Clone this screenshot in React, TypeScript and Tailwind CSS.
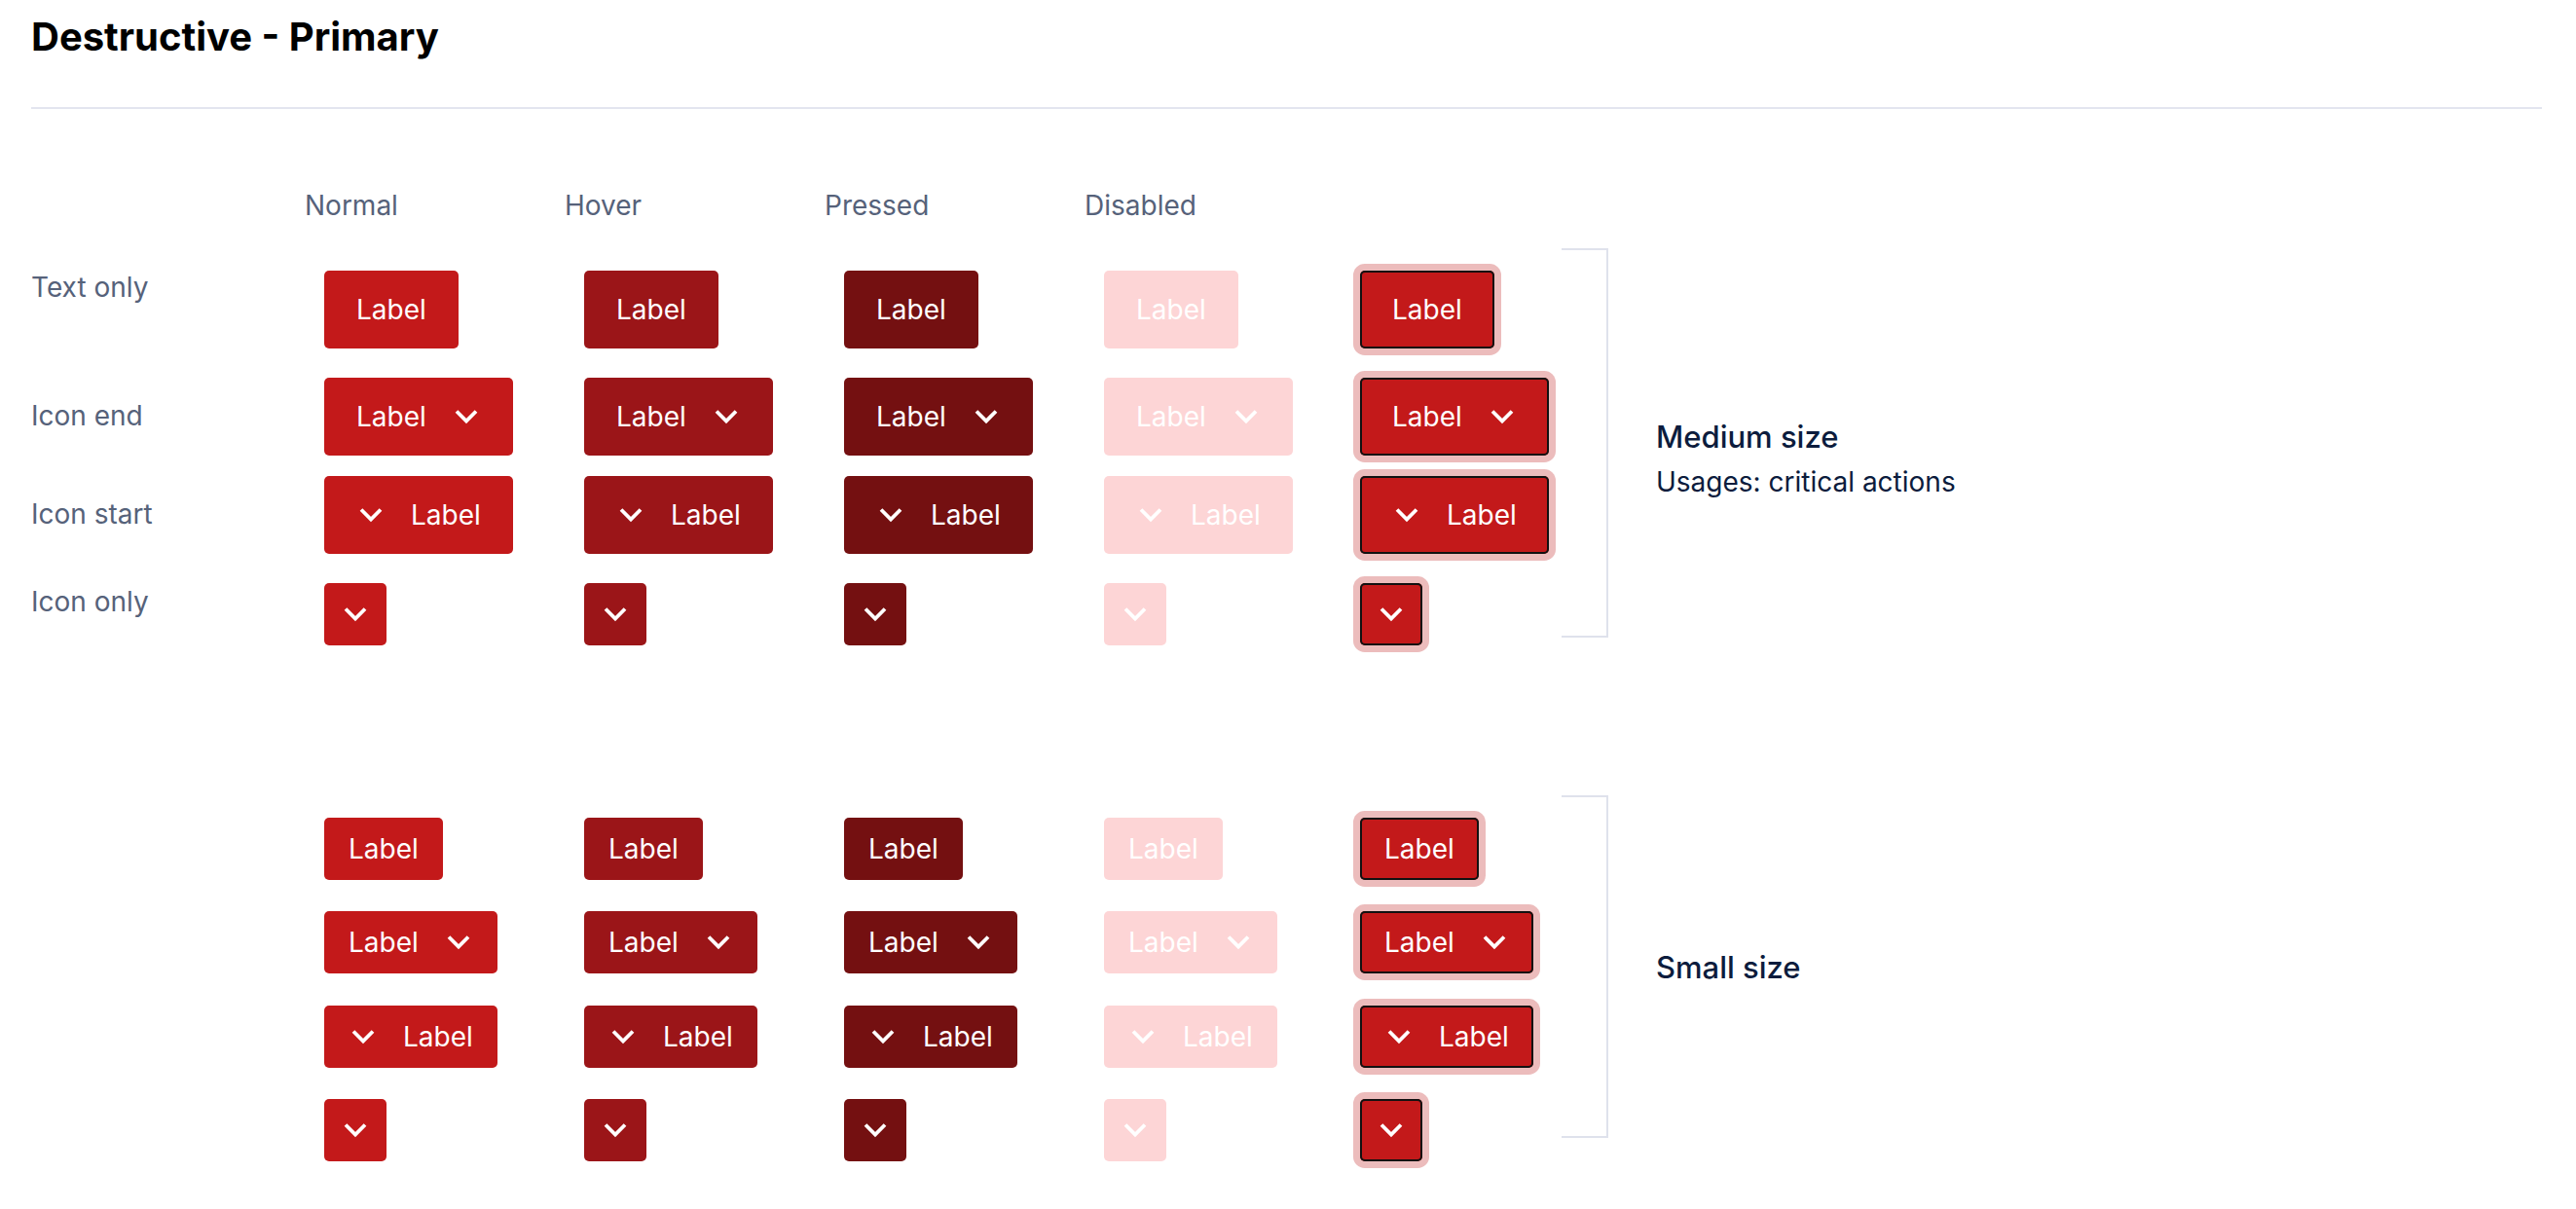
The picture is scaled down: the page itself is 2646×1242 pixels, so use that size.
import type { ReactNode } from "react";

type Variant = "text" | "end" | "start" | "icon";
type State = "normal" | "hover" | "pressed" | "disabled" | "focus";
type Size = "md" | "sm";

const states: State[] = ["normal", "hover", "pressed", "disabled", "focus"];
const cellWidths = ["w-[267px]", "w-[267px]", "w-[267px]", "w-[263px]", "w-[207px]"];

const stateClass: Record<State, string> = {
  normal: "bg-[#c3191a]",
  hover: "bg-[#9b1518]",
  pressed: "bg-[#741011]",
  disabled: "bg-[#fdd5d6]",
  focus: "bg-[#c3191a] shadow-[inset_0_0_0_2px_#111111,0_0_0_7px_#ecbcbc]",
};

const Chevron = () => (
  <svg width="30" height="16" viewBox="0 0 30 16" fill="none" className="shrink-0">
    <path d="M5 2.5L15 12.5L25 2.5" stroke="white" strokeWidth="3.8" />
  </svg>
);

const DemoButton = ({ variant, state, size }: { variant: Variant; state: State; size: Size }) => {
  const base = "flex items-center justify-center rounded-[5px] text-white text-[28px] leading-[34px]";

  if (variant === "icon") {
    return (
      <button className={`${base} w-[64px] h-[64px] ${stateClass[state]}`}>
        <Chevron />
      </button>
    );
  }

  const sizing = size === "md" ? "h-[80px] px-[33px]" : "h-[64px] px-[25px]";

  return (
    <button className={`${base} gap-[26px] ${sizing} ${stateClass[state]}`}>
      {variant === "start" && <Chevron />}
      <span>Label</span>
      {variant === "end" && <Chevron />}
    </button>
  );
};

interface RowProps {
  label?: string;
  labelClass?: string;
  className?: string;
  variant: Variant;
  size: Size;
}

const Row = ({ label, labelClass = "", className = "", variant, size }: RowProps) => (
  <div className={`flex items-start ${className}`}>
    <div className={`w-[301px] shrink-0 text-[28px] leading-[34px] text-[#56627a] ${labelClass}`}>{label}</div>
    {states.map((s, i) => (
      <div key={s} className={`${cellWidths[i]} shrink-0 flex`}>
        <DemoButton variant={variant} state={s} size={size} />
      </div>
    ))}
  </div>
);

const Section = ({
  children,
  bracketHeight,
  className,
  description,
}: {
  children: ReactNode;
  bracketHeight: string;
  className: string;
  description: ReactNode;
}) => (
  <div className={`flex items-start ${className}`}>
    <div className="w-[1572px] shrink-0 pt-[23px] flex flex-col">{children}</div>
    <div className={`w-[48px] ${bracketHeight} shrink-0 border-y-2 border-r-2 border-[#dfe2ec]`} />
    {description}
  </div>
);

export default function App() {
  return (
    <div className="min-h-screen bg-white pl-[32px] pr-[35px] pt-[13px] font-['Inter',sans-serif]">
      <h1 className="text-[40px] font-bold leading-[50px] text-black">Destructive - Primary</h1>
      <div className="mt-[47px] h-[2px] bg-[#e3e5ef]" />

      {/* column headers */}
      <div className="mt-[82px] flex text-[28px] leading-[34px] text-[#56627a]">
        <div className="w-[281px] shrink-0" />
        {["Normal", "Hover", "Pressed", "Disabled"].map((h) => (
          <div key={h} className="w-[267px] shrink-0">
            {h}
          </div>
        ))}
      </div>

      {/* medium size */}
      <Section
        className="mt-[27px]"
        bracketHeight="h-[400px]"
        description={
          <div className="ml-[49px] mt-[175px] text-[#0c1c3d]">
            <div className="text-[31px] font-medium leading-[38px]">Medium size</div>
            <div className="mt-[10px] text-[28px] leading-[34px]">Usages: critical actions</div>
          </div>
        }
      >
        <Row label="Text only" variant="text" size="md" />
        <Row label="Icon end" labelClass="pt-[22px]" className="mt-[30px]" variant="end" size="md" />
        <Row label="Icon start" labelClass="pt-[22px]" className="mt-[21px]" variant="start" size="md" />
        <Row label="Icon only" labelClass="pt-[2px]" className="mt-[30px]" variant="icon" size="md" />
      </Section>

      {/* small size */}
      <Section
        className="mt-[154px]"
        bracketHeight="h-[352px]"
        description={
          <div className="ml-[49px] mt-[158px] text-[31px] font-medium leading-[38px] text-[#0c1c3d]">Small size</div>
        }
      >
        <Row variant="text" size="sm" />
        <Row className="mt-[32px]" variant="end" size="sm" />
        <Row className="mt-[33px]" variant="start" size="sm" />
        <Row className="mt-[32px]" variant="icon" size="sm" />
      </Section>
    </div>
  );
}
